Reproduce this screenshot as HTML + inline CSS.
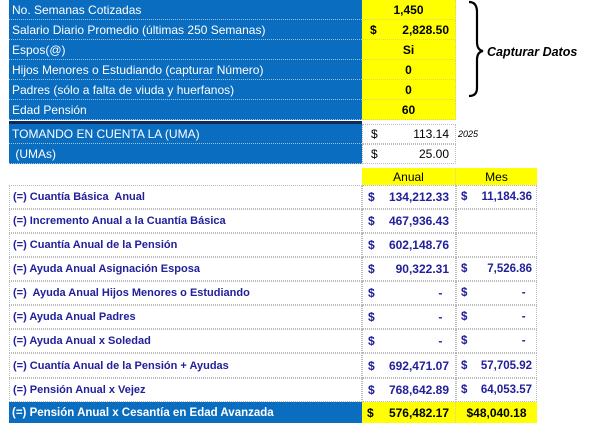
<!DOCTYPE html>
<html><head><meta charset="utf-8"><style>
*{margin:0;padding:0;box-sizing:border-box}
body{width:604px;height:423px;background:#fff;position:relative;overflow:hidden;font-family:"Liberation Sans",sans-serif}
.c{position:absolute;display:flex;align-items:center;white-space:nowrap}
.bl{background:#0a6dbf;color:#fff;font-size:12px;padding-left:3px;border-bottom:1px dotted #9cc4e8}
.yl{background:#ffff00;color:#000;font-weight:bold;font-size:12px;justify-content:center;border-bottom:1px dotted #d8d870;border-right:1px dotted #d8d870}
.wh{border:1px dotted #bbb;font-size:12px;color:#000}
.lab{color:#22209a;font-weight:bold;font-size:11px;padding-left:3px;border:1px dotted #bbb}
.num{color:#22209a;font-weight:bold;font-size:12px;border:1px dotted #bbb;justify-content:space-between;padding:0 6px 0 5px}
.m{font-size:11.5px;padding:0 4px}
</style></head><body>
<div class="c bl" style="left:9px;top:0;width:353px;height:20px">No. Semanas Cotizadas</div>
<div class="c bl" style="left:9px;top:20px;width:353px;height:20px">Salario Diario Promedio (últimas 250 Semanas)</div>
<div class="c bl" style="left:9px;top:40px;width:353px;height:20px">Espos(@)</div>
<div class="c bl" style="left:9px;top:60px;width:353px;height:20px">Hijos Menores o Estudiando (capturar Número)</div>
<div class="c bl" style="left:9px;top:80px;width:353px;height:20px">Padres (sólo a falta de viuda y huerfanos)</div>
<div class="c bl" style="left:9px;top:100px;width:353px;height:20px">Edad Pensión</div>
<div class="c yl" style="left:362px;top:0;width:94px;height:20px">1,450</div>
<div class="c yl" style="left:362px;top:20px;width:94px;height:20px;justify-content:space-between;padding:0 6px 0 8px"><span>$</span><span>2,828.50</span></div>
<div class="c yl" style="left:362px;top:40px;width:94px;height:20px">Si</div>
<div class="c yl" style="left:362px;top:60px;width:94px;height:20px">0</div>
<div class="c yl" style="left:362px;top:80px;width:94px;height:20px">0</div>
<div class="c yl" style="left:362px;top:100px;width:94px;height:20px">60</div>
<div style="position:absolute;left:9px;top:121px;width:353px;height:3px;background:#0d2a5a"></div>
<svg style="position:absolute;left:462px;top:0" width="26" height="100"><path d="M7 2 Q15 2 15 12 L15 42 Q15 50 21 51 Q15 52 15 60 L15 88 Q15 96 7 96" fill="none" stroke="#000" stroke-width="2.2"/></svg>
<div class="c" style="left:487px;top:43px;height:18px;font-size:12.5px;font-weight:bold;font-style:italic">Capturar Datos</div>
<div class="c bl" style="left:9px;top:124px;width:353px;height:20px">TOMANDO EN CUENTA LA (UMA)</div>
<div class="c bl" style="left:9px;top:144px;width:353px;height:20px">&nbsp;(UMAs)</div>
<div class="c wh" style="left:362px;top:124px;width:94px;height:20px;justify-content:space-between;padding:0 6px 0 8px"><span>$</span><span>113.14</span></div>
<div class="c wh" style="left:362px;top:144px;width:94px;height:20px;justify-content:space-between;padding:0 6px 0 8px"><span>$</span><span>25.00</span></div>
<div class="c" style="left:458px;top:126px;height:16px;font-size:9px;font-style:italic">2025</div>
<div class="c" style="left:362px;top:168px;width:94px;height:17px;background:#ffff00;font-size:12px;justify-content:center;border-right:1px dotted #ccc">Anual</div>
<div class="c" style="left:456px;top:168px;width:81px;height:17px;background:#ffff00;font-size:12px;justify-content:center">Mes</div>

<div class="c lab" style="left:9px;top:185px;width:353px;height:24px">(=) Cuantía Básica&nbsp; Anual</div>
<div class="c num" style="left:362px;top:185px;width:94px;height:24px"><span>$</span><span>134,212.33</span></div>
<div class="c num m" style="left:456px;top:185px;width:81px;height:24px"><span>$</span><span>11,184.36</span></div>

<div class="c lab" style="left:9px;top:209px;width:353px;height:24px">(=) Incremento Anual a la Cuantía Básica</div>
<div class="c num" style="left:362px;top:209px;width:94px;height:24px"><span>$</span><span>467,936.43</span></div>
<div class="c num" style="left:456px;top:209px;width:81px;height:24px"></div>

<div class="c lab" style="left:9px;top:233px;width:353px;height:24px">(=) Cuantía Anual de la Pensión</div>
<div class="c num" style="left:362px;top:233px;width:94px;height:24px"><span>$</span><span>602,148.76</span></div>
<div class="c num" style="left:456px;top:233px;width:81px;height:24px"></div>

<div class="c lab" style="left:9px;top:257px;width:353px;height:24px">(=) Ayuda Anual Asignación Esposa</div>
<div class="c num" style="left:362px;top:257px;width:94px;height:24px"><span>$</span><span>90,322.31</span></div>
<div class="c num m" style="left:456px;top:257px;width:81px;height:24px"><span>$</span><span>7,526.86</span></div>

<div class="c lab" style="left:9px;top:281px;width:353px;height:24px">(=)&nbsp; Ayuda Anual Hijos Menores o Estudiando</div>
<div class="c num" style="left:362px;top:281px;width:94px;height:24px"><span>$</span><span>-&nbsp;&nbsp;</span></div>
<div class="c num m" style="left:456px;top:281px;width:81px;height:24px"><span>$</span><span>-&nbsp;&nbsp;</span></div>

<div class="c lab" style="left:9px;top:305px;width:353px;height:24px">(=) Ayuda Anual Padres</div>
<div class="c num" style="left:362px;top:305px;width:94px;height:24px"><span>$</span><span>-&nbsp;&nbsp;</span></div>
<div class="c num m" style="left:456px;top:305px;width:81px;height:24px"><span>$</span><span>-&nbsp;&nbsp;</span></div>

<div class="c lab" style="left:9px;top:329px;width:353px;height:24px">(=) Ayuda Anual x Soledad</div>
<div class="c num" style="left:362px;top:329px;width:94px;height:24px"><span>$</span><span>-&nbsp;&nbsp;</span></div>
<div class="c num m" style="left:456px;top:329px;width:81px;height:24px"><span>$</span><span>-&nbsp;&nbsp;</span></div>

<div class="c lab" style="left:9px;top:353px;width:353px;height:25px">(=) Cuantía Anual de la Pensión + Ayudas</div>
<div class="c num" style="left:362px;top:353px;width:94px;height:25px"><span>$</span><span>692,471.07</span></div>
<div class="c num m" style="left:456px;top:353px;width:81px;height:25px"><span>$</span><span>57,705.92</span></div>

<div class="c lab" style="left:9px;top:378px;width:353px;height:24px">(=) Pensión Anual x Vejez</div>
<div class="c num" style="left:362px;top:378px;width:94px;height:24px"><span>$</span><span>768,642.89</span></div>
<div class="c num m" style="left:456px;top:378px;width:81px;height:24px"><span>$</span><span>64,053.57</span></div>

<div class="c" style="left:9px;top:402px;width:353px;height:21px;background:#0a6dbf;color:#fff;font-weight:bold;font-size:11.5px;padding-left:3px">(=) Pensión Anual x Cesantía en Edad Avanzada</div>
<div class="c" style="left:362px;top:402px;width:94px;height:21px;background:#ffff00;color:#000;font-weight:bold;font-size:12px;justify-content:space-between;padding:0 6px 0 5px;border-right:1px dotted #ccc"><span>$</span><span>576,482.17</span></div>
<div class="c" style="left:456px;top:402px;width:81px;height:21px;background:#ffff00;color:#000;font-weight:bold;font-size:12px;justify-content:center">$48,040.18</div>
</body></html>
